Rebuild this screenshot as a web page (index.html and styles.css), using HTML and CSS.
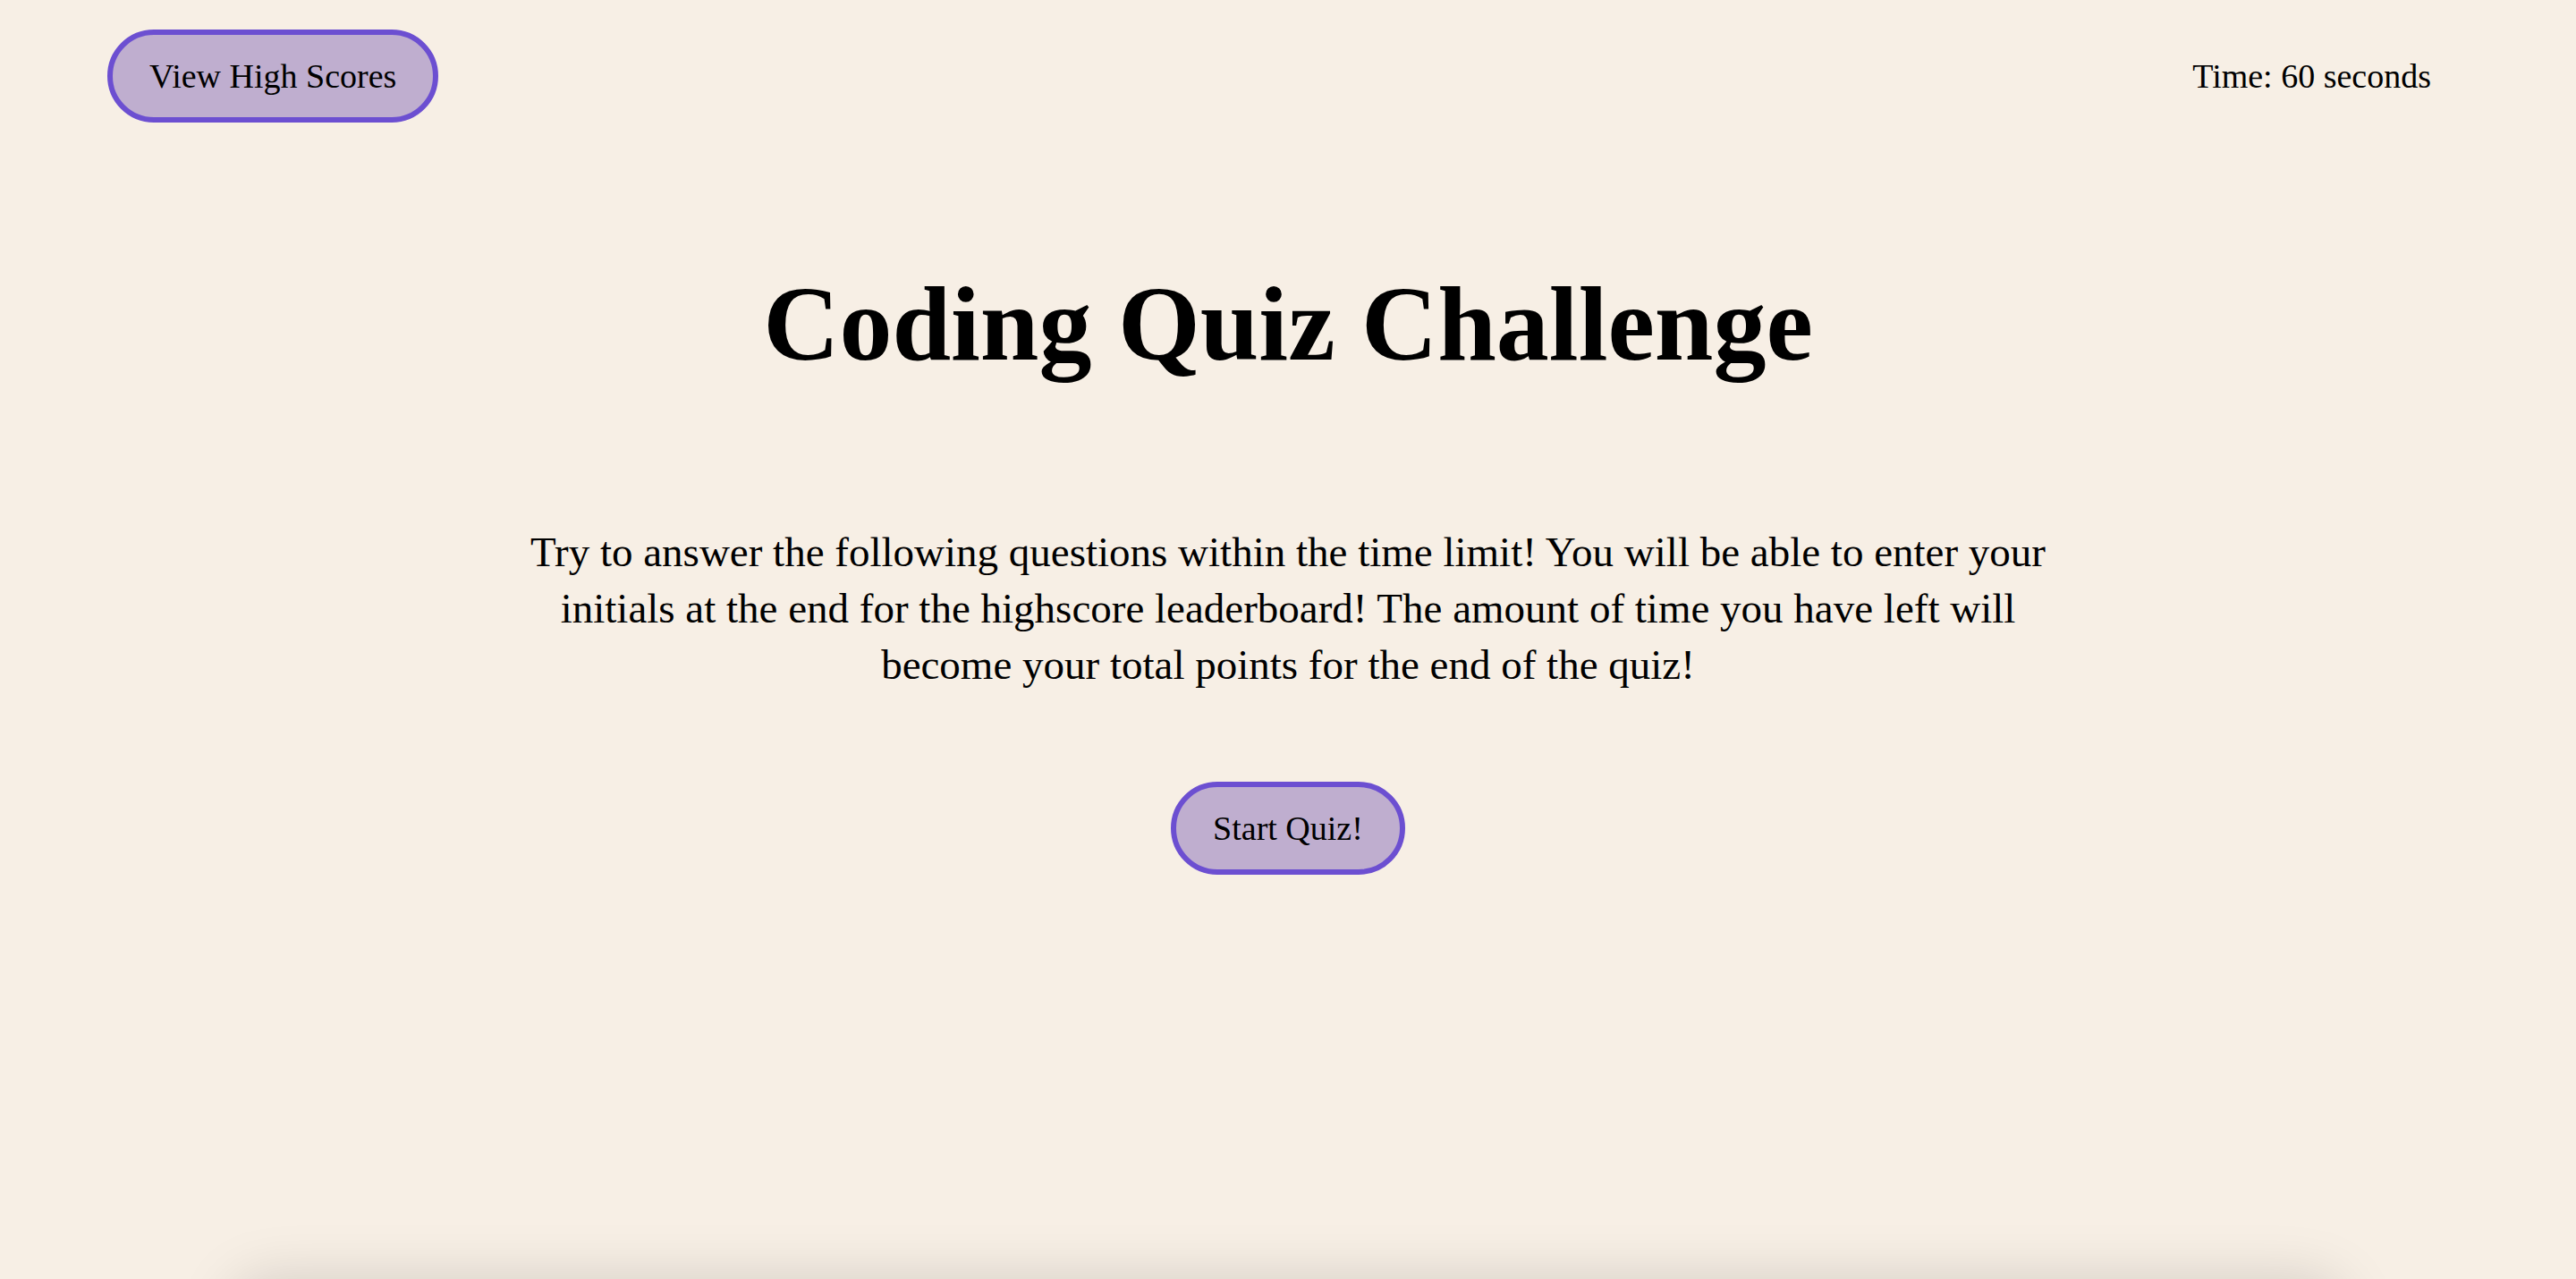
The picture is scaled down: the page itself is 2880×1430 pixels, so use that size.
FILE: index.html
```html
<!DOCTYPE html>
<html lang="en">
<head>
<meta charset="utf-8">
<title>Coding Quiz Challenge</title>
<link rel="stylesheet" href="styles.css">
</head>
<body>
<div class="viewport">
  <div class="screen">
    <header class="topbar">
      <button class="btn" type="button">View High Scores</button>
      <div class="timer">Time: 60 seconds</div>
    </header>
    <main class="intro">
      <h1 class="title">Coding Quiz Challenge</h1>
      <p class="lead">Try to answer the following questions within the time limit! You will be able to enter your initials at the end for the highscore leaderboard! The amount of time you have left will become your total points for the end of the quiz!</p>
      <button class="btn" type="button">Start Quiz!</button>
    </main>
  </div>
  <section class="quiz-card"></section>
</div>
</body>
</html>
```

FILE: styles.css
```css
html, body {
  margin: 0;
  padding: 0;
  background: #f7efe5;
}

body {
  font-family: "Liberation Serif", "Times New Roman", serif;
  color: #000;
}

.viewport {
  height: 100vh;
  overflow: hidden;
}

.screen {
  min-height: 100vh;
  display: flex;
  flex-direction: column;
}

.topbar {
  display: flex;
  justify-content: space-between;
  align-items: center;
  padding: 33px 162px 0 120px;
}

.btn {
  font-family: "Liberation Serif", "Times New Roman", serif;
  font-size: 38px;
  line-height: 44px;
  color: #000;
  background: #bfaecf;
  border: 6px solid #6c4fd1;
  border-radius: 60px;
  padding: 24px 41px;
  cursor: pointer;
}

.timer {
  font-size: 38px;
  line-height: 44px;
}

.intro {
  display: flex;
  flex-direction: column;
  align-items: center;
  text-align: center;
}

.title {
  margin: 157px 0 0;
  font-size: 118px;
  line-height: 138px;
  font-weight: 700;
}

.lead {
  margin: 154px 0 99px;
  width: 1760px;
  font-size: 47px;
  line-height: 63px;
}

.quiz-card {
  width: 82%;
  height: 300px;
  margin: 0 auto;
  border-radius: 40px;
  background: #f7efe5;
  box-shadow: 0 0 64px rgba(0, 0, 0, 0.15);
}
```
